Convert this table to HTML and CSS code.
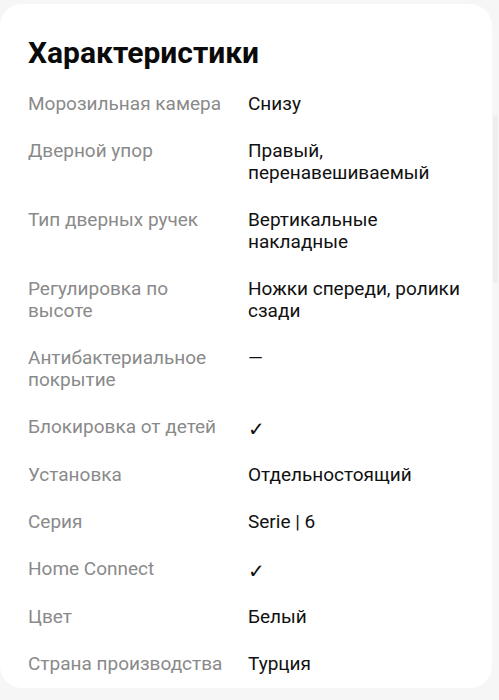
FILE: index.html
```html
<!DOCTYPE html>
<html lang="ru">
<head>
<meta charset="utf-8">
<link rel="stylesheet" href="styles.css">
</head>
<body>
<div class="card">
  <h1 class="title">Характеристики</h1>
  <dl class="specs">
    <dt>Морозильная камера</dt><dd>Снизу</dd>
    <dt>Дверной упор</dt><dd>Правый, перенавешиваемый</dd>
    <dt>Тип дверных ручек</dt><dd>Вертикальные накладные</dd>
    <dt>Регулировка по высоте</dt><dd>Ножки спереди, ролики сзади</dd>
    <dt>Антибактериальное покрытие</dt><dd>—</dd>
    <dt>Блокировка от детей</dt><dd class="check">✓</dd>
    <dt>Установка</dt><dd>Отдельностоящий</dd>
    <dt>Серия</dt><dd>Serie | 6</dd>
    <dt>Home Connect</dt><dd class="check">✓</dd>
    <dt>Цвет</dt><dd>Белый</dd>
    <dt>Страна производства</dt><dd>Турция</dd>
  </dl>
</div>
<div class="scroll-thumb"></div>
</body>
</html>
```

FILE: styles.css
```css
html, body {
  margin: 0;
  padding: 0;
  background: #f6f6f6;
}
body {
  font-family: Roboto, "Noto Sans", sans-serif;
  height: 700px;
  overflow: hidden;
  position: relative;
}
.card {
  margin-top: 4px;
  width: 492px;
  height: 684px;
  box-sizing: border-box;
  background: #ffffff;
  border-radius: 22px;
  padding: 32px 22px 0 28px;
}
.title {
  margin: 0 0 23px 0;
  font-size: 30px;
  line-height: 34px;
  font-weight: 700;
  color: #0a0a0a;
}
.specs {
  margin: 0;
  display: grid;
  grid-template-columns: 208px 1fr;
  column-gap: 12px;
  row-gap: 25px;
  font-size: 19px;
  line-height: 22px;
}
.specs dt {
  color: #8a8a8a;
}
.specs dd {
  margin: 0;
  color: #111111;
}
.specs dd.check {
  font-family: "DejaVu Sans", sans-serif;
  font-size: 20px;
  line-height: 22px;
  height: 23px;
  padding-top: 2px;
  box-sizing: border-box;
}
.scroll-thumb {
  position: absolute;
  left: 493px;
  top: 115px;
  width: 5px;
  height: 168px;
  background: #eeeeee;
  border-radius: 3px;
}
```
